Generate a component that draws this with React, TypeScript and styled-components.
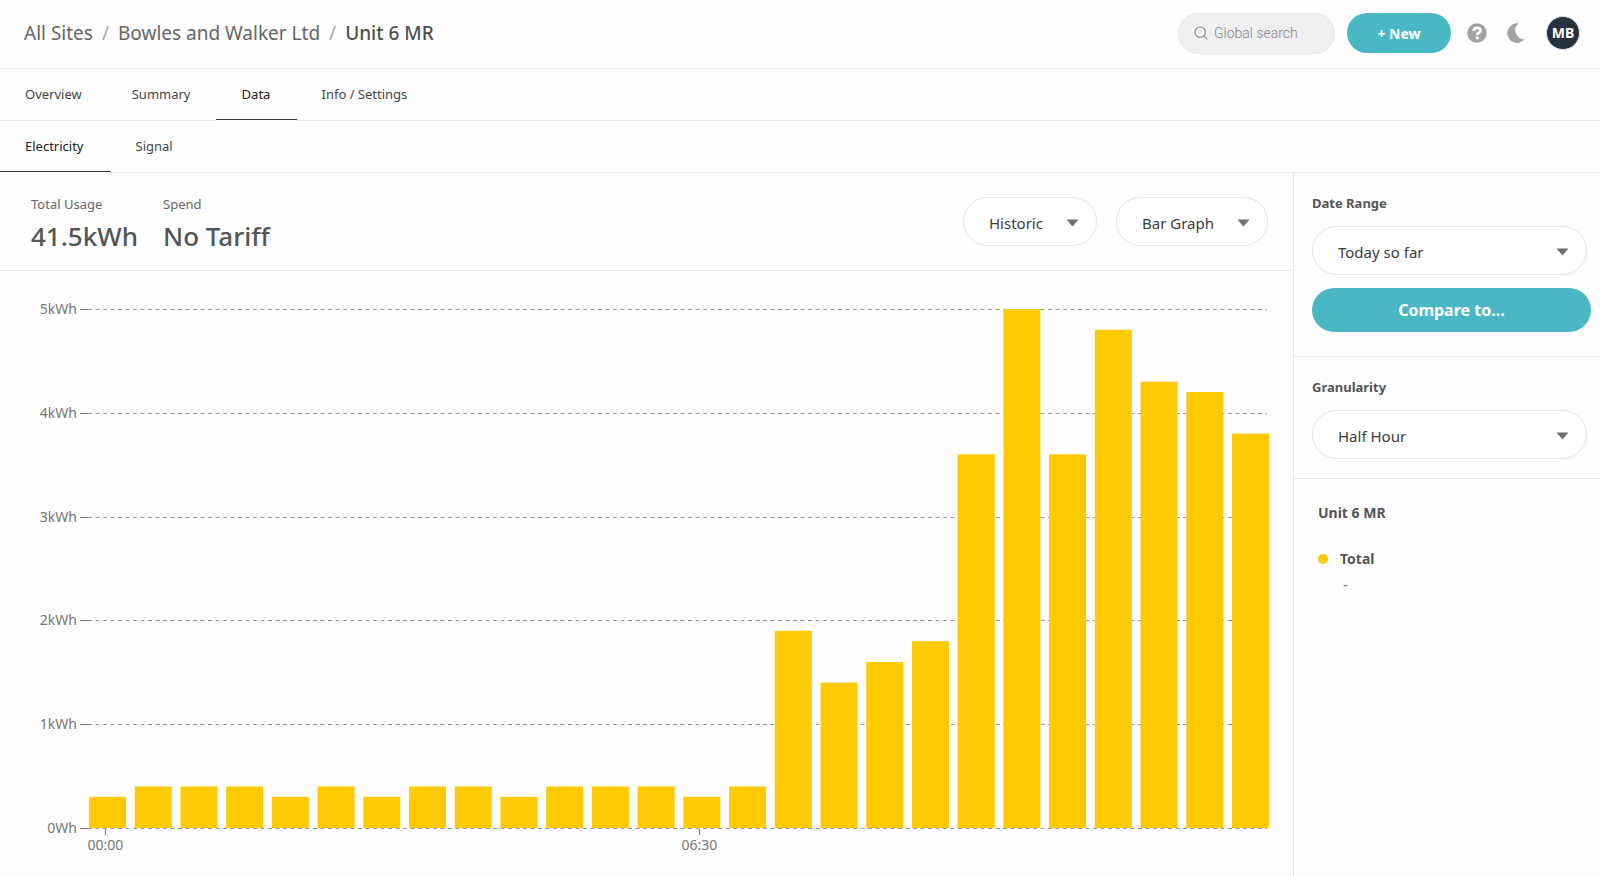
import React, { useEffect, useRef, useState } from "react";
import styled, { createGlobalStyle } from "styled-components";

const color = {
  line: "#e4e4e4",
  text: "#555555",
  muted: "#777777",
  teal: "#49b8c4",
  yellow: "#ffca04",
  icon: "#a3a3a3",
};

const GlobalStyle = createGlobalStyle`
  * { box-sizing: border-box; }
  body {
    margin: 0;
    background: #fefefe;
    color: ${color.text};
    font-family: "Noto Sans", "Open Sans", sans-serif;
    font-size: 13px;
  }
  button, input, select { font-family: inherit; }
`;

const Page = styled.div`
  display: flex;
  flex-direction: column;
  min-height: 100vh;
`;

const Header = styled.header`
  display: flex;
  align-items: center;
  justify-content: space-between;
  height: 69px;
  padding: 0 20px 2px 24px;
  border-bottom: 1px solid ${color.line};
`;

const Breadcrumb = styled.nav`
  display: flex;
  gap: 9px;
  font-size: 19px;
  line-height: 28px;
`;

const Crumb = styled.a<{ $current?: boolean }>`
  color: ${(p) => (p.$current ? "#505050" : "#666666")};
  font-weight: ${(p) => (p.$current ? 500 : 400)};
  text-decoration: none;
`;

const Slash = styled.span`
  color: #aaaaaa;
`;

const Actions = styled.div`
  display: flex;
  align-items: center;
`;

const SearchBox = styled.label`
  display: flex;
  align-items: center;
  gap: 6px;
  width: 157px;
  height: 41px;
  margin-right: 12px;
  padding: 0 15px;
  border: 1px solid #e6e6e6;
  border-radius: 21px;
  background: #f0f0f0;
`;

const SearchInput = styled.input`
  flex: 1;
  min-width: 0;
  padding: 0;
  border: 0;
  outline: 0;
  background: transparent;
  font-family: Roboto, sans-serif;
  font-size: 14px;
  font-weight: 300;
  color: #666666;
  &::placeholder { color: #848484; opacity: 1; }
`;

const PrimaryButton = styled.button<{ $large?: boolean }>`
  width: ${(p) => (p.$large ? "auto" : "104px")};
  height: ${(p) => (p.$large ? "44px" : "40px")};
  padding: 0;
  border: 0;
  border-radius: 22px;
  background: ${color.teal};
  color: #ffffff;
  font-size: ${(p) => (p.$large ? "16px" : "14px")};
  font-weight: 700;
  cursor: pointer;
`;

const IconButton = styled.button`
  display: flex;
  margin-left: 16px;
  padding: 0;
  border: 0;
  background: none;
  cursor: pointer;
  & + & { margin-left: 19px; }
`;

const Avatar = styled.button`
  width: 34px;
  height: 34px;
  margin-left: 20px;
  padding: 0;
  border: 1px solid #d5dde4;
  border-radius: 50%;
  background: #26333f;
  color: #ffffff;
  font-size: 14px;
  font-weight: 700;
  line-height: 30px;
  cursor: pointer;
`;

const Tabs = styled.nav`
  display: flex;
  height: 52px;
  border-bottom: 1px solid ${color.line};
`;

const Tab = styled.a<{ $active?: boolean; $wide?: boolean }>`
  display: flex;
  align-items: center;
  justify-content: center;
  min-width: 81px;
  padding: 0 ${(p) => (p.$wide ? 27 : 25)}px 0 25px;
  border-bottom: 1px solid ${(p) => (p.$active ? "#333840" : "transparent")};
  box-shadow: ${(p) => (p.$active ? "0 1px #fefefe" : "none")};
  color: ${(p) => (p.$active ? "#222222" : "#444444")};
  font-size: 13px;
  text-decoration: none;
`;

const Body = styled.div`
  display: flex;
  flex: 1;
`;

const Main = styled.main`
  flex: 1;
  min-width: 0;
`;

const SummaryBar = styled.section`
  display: flex;
  justify-content: space-between;
  align-items: center;
  height: 98px;
  padding: 0 25px 0 31px;
  border-bottom: 1px solid ${color.line};
`;

const Stats = styled.dl`
  display: flex;
  gap: 25px;
  margin: 0;
  padding-top: 8px;
`;

const StatLabel = styled.dt`
  line-height: 20px;
  color: #666666;
`;

const StatValue = styled.dd`
  margin: 0;
  font-size: 26px;
  font-weight: 500;
  line-height: 44px;
`;

const Filters = styled.div`
  display: flex;
  gap: 19px;
`;

const SelectWrap = styled.div<{ $width: string }>`
  position: relative;
  width: ${(p) => p.$width};
`;

const SelectBox = styled.select`
  display: block;
  appearance: none;
  width: 100%;
  height: 49px;
  padding: 2px 40px 0 25px;
  border: 1px solid ${color.line};
  border-radius: 25px;
  background: #ffffff;
  color: #3c3c3c;
  font-size: 15px;
`;

const Caret = styled.svg`
  position: absolute;
  top: 22px;
  right: 18px;
  pointer-events: none;
`;

const ChartArea = styled.section`
  height: 605px;
  overflow: hidden;
`;

const ChartSvg = styled.svg`
  display: block;
  font-size: 14px;
  fill: ${color.muted};
`;

const Sidebar = styled.aside`
  flex: none;
  width: 307px;
  border-left: 1px solid ${color.line};
`;

const Panel = styled.section`
  display: flex;
  flex-direction: column;
  padding: 20px 9px 19px 18px;
  border-bottom: 1px solid ${color.line};
`;

const PanelLabel = styled.label`
  margin-bottom: 13px;
  font-weight: 700;
  line-height: 20px;
`;

const CompareRow = styled.div`
  display: grid;
  padding: 13px 0 5px;
`;

const Legend = styled.section`
  padding: 24px;
  font-size: 14px;
`;

const LegendTitle = styled.h2`
  margin: 0 0 26px;
  font-size: 14px;
  line-height: 20px;
`;

const LegendItem = styled.div`
  display: grid;
  grid-template-columns: 10px auto;
  column-gap: 12px;
  align-items: center;
  line-height: 20px;
`;

const LegendDot = styled.span`
  width: 10px;
  height: 10px;
  border-radius: 50%;
  background: ${color.yellow};
`;

const LegendName = styled.span`
  font-weight: 700;
`;

const LegendValue = styled.span`
  grid-column: 2;
  padding: 6px 3px;
  color: ${color.muted};
`;

function Dropdown({ id, value, width, label }: { id: string; value: string; width: string; label?: string }) {
  return (
    <SelectWrap $width={width}>
      <SelectBox id={id} aria-label={label} defaultValue={value}>
        <option>{value}</option>
      </SelectBox>
      <Caret width="13" height="8" viewBox="0 0 13 8" aria-hidden="true">
        <path d="M0.5 0.5h12L6.5 7.5z" fill="#707070" />
      </Caret>
    </SelectWrap>
  );
}

const usage = [
  0.3, 0.4, 0.4, 0.4, 0.3, 0.4, 0.3, 0.4, 0.4, 0.3, 0.4, 0.4, 0.4, 0.3, 0.4, 1.9, 1.4, 1.6, 1.8, 3.6, 5, 3.6, 4.8,
  4.3, 4.2, 3.8,
];
const timeTicks = [
  { index: 0, label: "00:00" },
  { index: 13, label: "06:30" },
];
const plot = { left: 89, right: 24, top: 38, height: 519 };

function UsageChart() {
  const ref = useRef<HTMLElement>(null);
  const [width, setWidth] = useState(1293);

  useEffect(() => {
    const el = ref.current;
    if (!el) return;
    const observer = new ResizeObserver(() => setWidth(el.clientWidth));
    observer.observe(el);
    return () => observer.disconnect();
  }, []);

  const end = width - plot.right;
  const barWidth = 37;
  const step = (end - plot.left - barWidth) / (usage.length - 1);
  const y = (kwh: number) => plot.top + plot.height * (1 - kwh / 5);

  return (
    <ChartArea ref={ref}>
      <ChartSvg width={width} height="605" role="img" aria-label="Electricity usage per half hour">
        {[0, 1, 2, 3, 4, 5].map((kwh) => {
          const lineY = Math.round(y(kwh)) + 0.5;
          return (
            <g key={kwh}>
              <path d={`M80 ${lineY}H88`} stroke="#777777" />
              <path d={`M88 ${lineY}H${end - 2}`} stroke="#999999" strokeDasharray="4 3.5" />
              <text x="77" y={lineY + 4} textAnchor="end">
                {kwh === 0 ? "0Wh" : `${kwh}kWh`}
              </text>
            </g>
          );
        })}
        {usage.map((kwh, i) => (
          <rect
            key={i}
            x={plot.left + i * step}
            y={y(kwh)}
            width={barWidth}
            height={y(0) - y(kwh)}
            fill={color.yellow}
          />
        ))}
        {timeTicks.map(({ index, label }) => {
          const x = Math.round(plot.left + index * step + 17) - 0.5;
          return (
            <g key={label}>
              <path d={`M${x} ${y(0) + 1}v6`} stroke="#777777" />
              <text x={x} y={y(0) + 22} textAnchor="middle">
                {label}
              </text>
            </g>
          );
        })}
      </ChartSvg>
    </ChartArea>
  );
}

export default function App() {
  return (
    <Page>
      <GlobalStyle />
      <Header>
        <Breadcrumb aria-label="Breadcrumb">
          <Crumb href="#sites">All Sites</Crumb>
          <Slash>/</Slash>
          <Crumb href="#bowles">Bowles and Walker Ltd</Crumb>
          <Slash>/</Slash>
          <Crumb href="#unit6" $current>
            Unit 6 MR
          </Crumb>
        </Breadcrumb>
        <Actions>
          <SearchBox>
            <svg width="14" height="14" viewBox="0 0 14 14" fill="none" stroke="#8c8c8c" strokeWidth="1.2" aria-hidden="true">
              <circle cx="6.2" cy="6.2" r="5.2" />
              <path d="M10 10l3.3 3.3" />
            </svg>
            <SearchInput type="search" placeholder="Global search" aria-label="Global search" />
          </SearchBox>
          <PrimaryButton type="button">+ New</PrimaryButton>
          <IconButton type="button" aria-label="Help">
            <svg width="20" height="20" viewBox="0 0 20 20">
              <circle cx="10" cy="10" r="9.8" fill={color.icon} />
              <path
                d="M6.7 8C6.8 5.900 8.100 4.800 10.100 4.800C12.100 4.800 13.400 5.900 13.400 7.500C13.400 9.600 10.300 9.600 10.300 11.900"
                fill="none"
                stroke="#ffffff"
                strokeWidth="2.700"
              />
              <circle cx="10.200" cy="14.900" r="1.600" fill="#ffffff" />
            </svg>
          </IconButton>
          <IconButton type="button" aria-label="Dark mode">
            <svg width="20" height="20" viewBox="0 0 20 20">
              <path d="M12.500 0.400A9.800 9.800 0 1 0 18.900 16.100A8.900 8.900 0 0 1 12.500 0.400Z" fill={color.icon} />
            </svg>
          </IconButton>
          <Avatar type="button">MB</Avatar>
        </Actions>
      </Header>
      <Tabs aria-label="Site">
        <Tab href="#overview">Overview</Tab>
        <Tab href="#summary">Summary</Tab>
        <Tab href="#data" $active>
          Data
        </Tab>
        <Tab href="#info">Info / Settings</Tab>
      </Tabs>
      <Tabs aria-label="Data">
        <Tab href="#electricity" $active $wide>
          Electricity
        </Tab>
        <Tab href="#signal" $wide>
          Signal
        </Tab>
      </Tabs>
      <Body>
        <Main>
          <SummaryBar>
            <Stats>
              <div>
                <StatLabel>Total Usage</StatLabel>
                <StatValue>41.5kWh</StatValue>
              </div>
              <div>
                <StatLabel>Spend</StatLabel>
                <StatValue>No Tariff</StatValue>
              </div>
            </Stats>
            <Filters>
              <Dropdown id="period" label="Period" value="Historic" width="134px" />
              <Dropdown id="chart-type" label="Chart type" value="Bar Graph" width="152px" />
            </Filters>
          </SummaryBar>
          <UsageChart />
        </Main>
        <Sidebar>
          <Panel>
            <PanelLabel htmlFor="date-range">Date Range</PanelLabel>
            <Dropdown id="date-range" value="Today so far" width="275px" />
            <CompareRow>
              <PrimaryButton type="button" $large>
                Compare to…
              </PrimaryButton>
            </CompareRow>
          </Panel>
          <Panel>
            <PanelLabel htmlFor="granularity">Granularity</PanelLabel>
            <Dropdown id="granularity" value="Half Hour" width="275px" />
          </Panel>
          <Legend>
            <LegendTitle>Unit 6 MR</LegendTitle>
            <LegendItem>
              <LegendDot />
              <LegendName>Total</LegendName>
              <LegendValue>-</LegendValue>
            </LegendItem>
          </Legend>
        </Sidebar>
      </Body>
    </Page>
  );
}
